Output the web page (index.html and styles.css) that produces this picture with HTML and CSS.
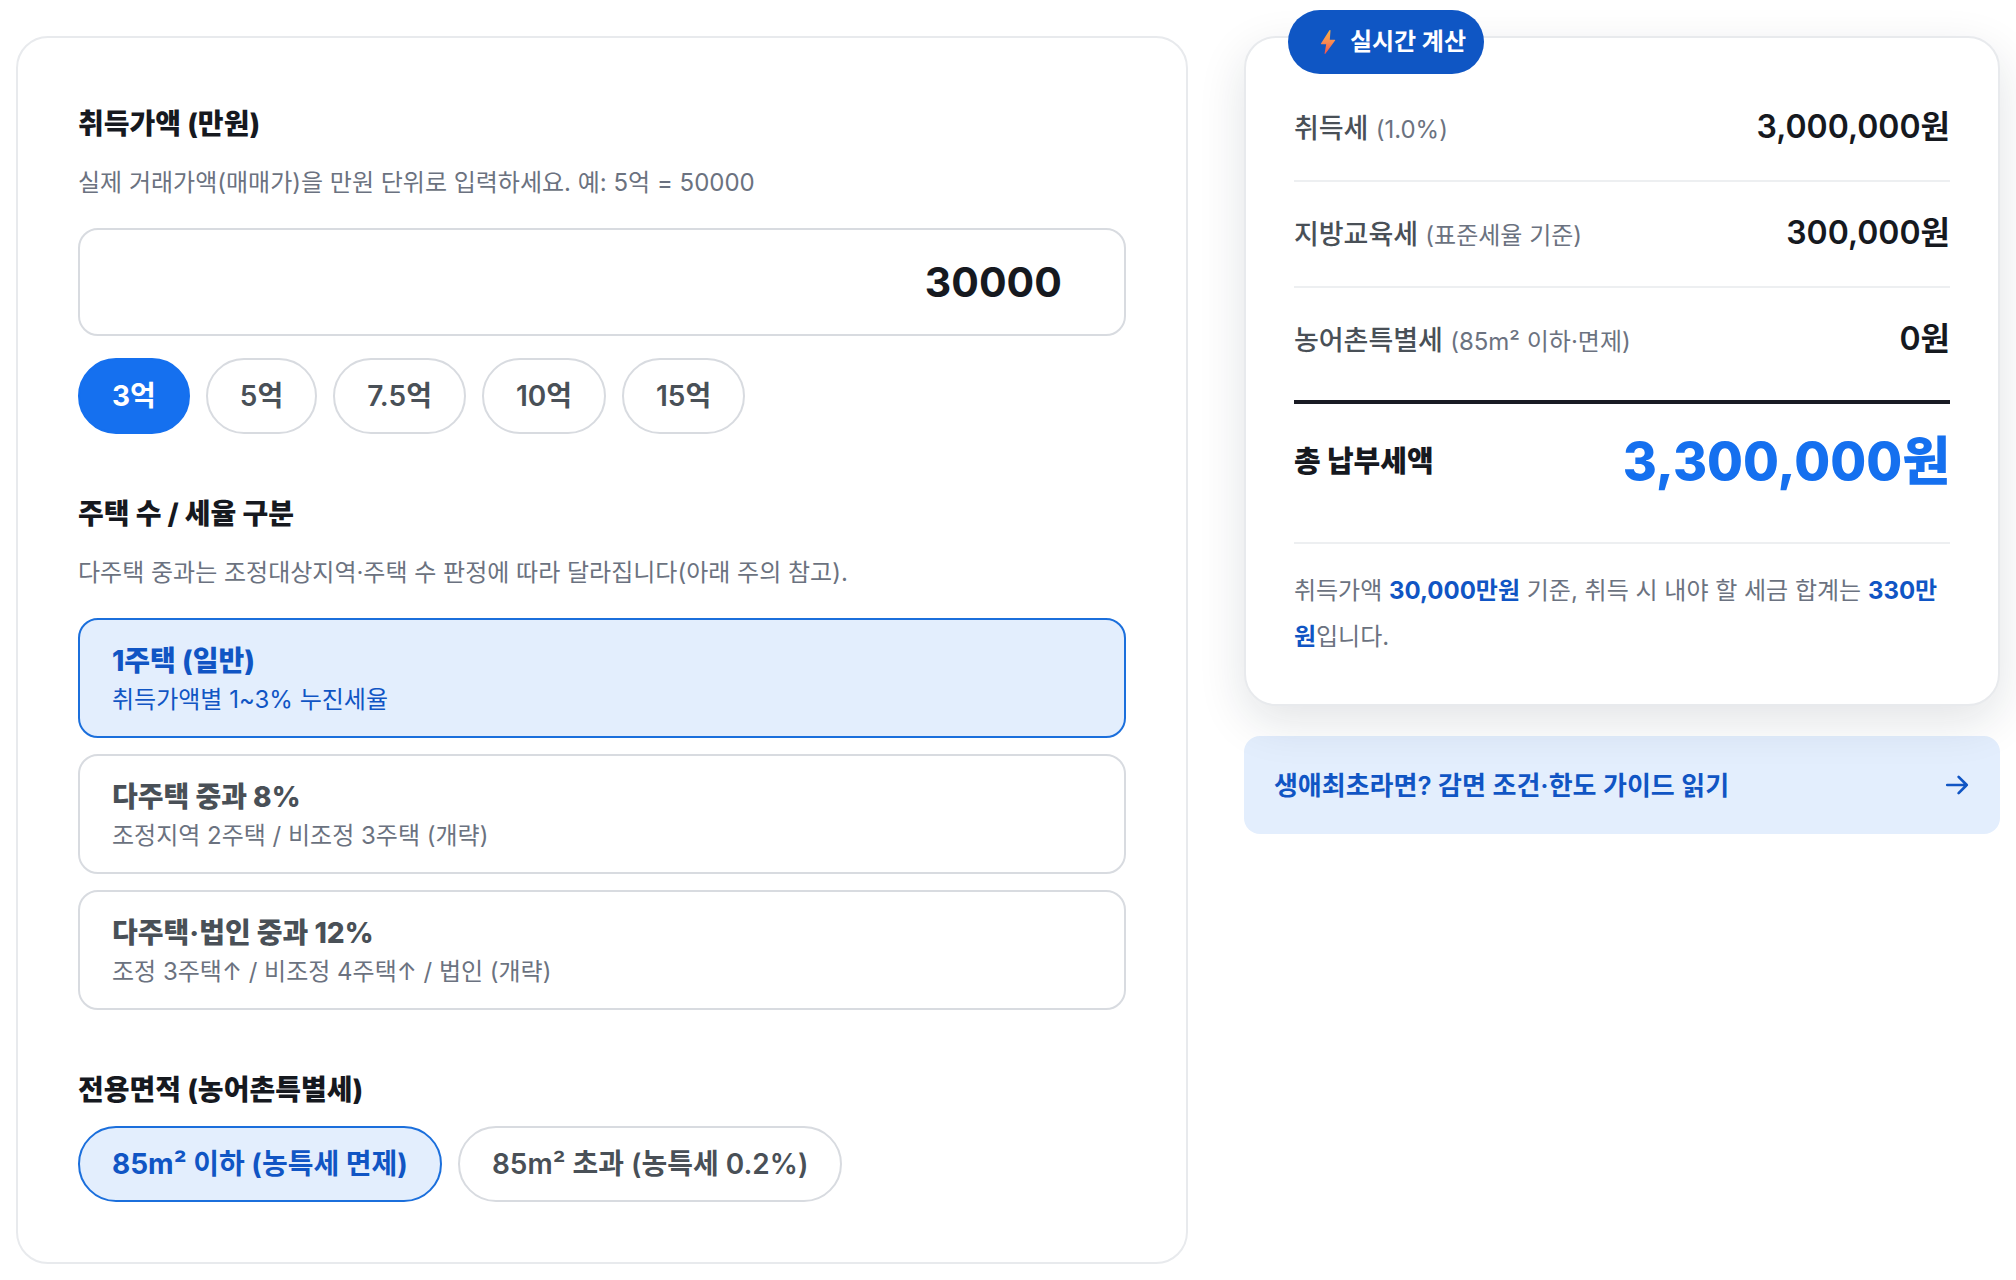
FILE: index.html
```html
<!DOCTYPE html>
<html lang="ko">
  <head>
    <meta charset="UTF-8" />
    <meta name="viewport" content="width=device-width, initial-scale=1.0" />
    <title>취득세 계산기</title>
    <link rel="stylesheet" href="styles.css">
  </head>
  <body>
    <main class="calculator">
      <form class="card form-card">
        <section class="field">
          <label class="field-title" for="price">취득가액 (만원)</label>
          <p class="field-hint" id="price-hint">실제 거래가액(매매가)을 만원 단위로 입력하세요. 예: 5억 = 50000</p>
          <input class="price-input" id="price" type="text" inputmode="numeric" value="30000" aria-describedby="price-hint" />
          <div class="chips">
            <button class="chip chip-primary" type="button">3억</button>
            <button class="chip" type="button">5억</button>
            <button class="chip" type="button">7.5억</button>
            <button class="chip" type="button">10억</button>
            <button class="chip" type="button">15억</button>
          </div>
        </section>

        <section class="field">
          <h2 class="field-title">주택 수 / 세율 구분</h2>
          <p class="field-hint">다주택 중과는 조정대상지역·주택 수 판정에 따라 달라집니다(아래 주의 참고).</p>
          <div class="options">
            <button class="option selected" type="button" aria-pressed="true">
              <strong class="option-name">1주택 (일반)</strong>
              <span class="option-desc">취득가액별 1~3% 누진세율</span>
            </button>
            <button class="option" type="button" aria-pressed="false">
              <strong class="option-name">다주택 중과 8%</strong>
              <span class="option-desc">조정지역 2주택 / 비조정 3주택 (개략)</span>
            </button>
            <button class="option" type="button" aria-pressed="false">
              <strong class="option-name">다주택·법인 중과 12%</strong>
              <span class="option-desc">조정 3주택↑ / 비조정 4주택↑ / 법인 (개략)</span>
            </button>
          </div>
        </section>

        <section class="field">
          <h2 class="field-title">전용면적 (농어촌특별세)</h2>
          <div class="chips">
            <button class="chip selected" type="button" aria-pressed="true">85m² 이하 (농특세 면제)</button>
            <button class="chip" type="button" aria-pressed="false">85m² 초과 (농특세 0.2%)</button>
          </div>
        </section>
      </form>

      <aside class="side">
        <section class="card result-card">
          <div class="badge">
            <svg class="badge-icon" viewBox="0 0 16 26" aria-hidden="true">
              <defs>
                <linearGradient id="bolt" x1="0" y1="0" x2="0" y2="1">
                  <stop offset="0" stop-color="#fbb03f" />
                  <stop offset="0.5" stop-color="#f98b52" />
                  <stop offset="1" stop-color="#ee5050" />
                </linearGradient>
              </defs>
              <path d="M9.4 1.200 1 14.400q-.4.800.5.800H6.200L4.600 24.200q-.1 1.300.8.500L15.100 11.600q.5-.8-.5-.8H9.800L10.500 1.600q0-1.200-1.100-.4z" fill="url(#bolt)" />
            </svg>
            <span>실시간 계산</span>
          </div>
          <dl class="rows">
            <div class="row">
              <dt>취득세 <small>(1.0%)</small></dt>
              <dd>3,000,000원</dd>
            </div>
            <div class="row">
              <dt>지방교육세 <small>(표준세율 기준)</small></dt>
              <dd>300,000원</dd>
            </div>
            <div class="row row-last">
              <dt>농어촌특별세 <small>(85m² 이하·면제)</small></dt>
              <dd>0원</dd>
            </div>
            <div class="row row-total">
              <dt>총 납부세액</dt>
              <dd>3,300,000원</dd>
            </div>
          </dl>
          <p class="summary">취득가액 <b>30,000만원</b> 기준, 취득 시 내야 할 세금 합계는 <b>330만원</b>입니다.</p>
        </section>
        <a class="guide-link" href="#guide">
          <span>생애최초라면? 감면 조건·한도 가이드 읽기</span>
          <svg class="guide-arrow" viewBox="0 0 24 24" aria-hidden="true">
            <path d="M3 12h18M13.500 4.500 21 12l-7.500 7.500" />
          </svg>
        </a>
      </aside>
    </main>
  </body>
</html>
```

FILE: styles.css
```css
* {
  box-sizing: border-box;
}
body {
  margin: 0;
  background-color: #fff;
  color: #16191f;
  font-family: Inter, "Noto Sans CJK KR", sans-serif;
  line-height: 1.5;
}
h2,
p,
dl,
dd {
  margin: 0;
}
button,
input {
  font: inherit;
}
.calculator {
  display: grid;
  grid-template-columns: 1.55fr 1fr;
  gap: 56px;
  align-items: start;
  padding: 36px 16px 16px;
}
.card {
  background-color: #fff;
  border: 2px solid #e8eaed;
  border-radius: 32px;
}

/* 입력 폼 */
.form-card {
  display: flex;
  flex-direction: column;
  gap: 58px;
  padding: 64px 60px 60px;
}
.field-title {
  display: block;
  font-size: 28px;
  font-weight: 800;
  line-height: 44px;
}
.field-hint {
  margin-top: 17px;
  color: #6b7280;
  font-size: 24px;
  line-height: 40px;
}
.price-input {
  display: block;
  width: 100%;
  height: 108px;
  margin-top: 25px;
  padding: 0 62px 0 32px;
  border: 2px solid #d8dbe0;
  border-radius: 20px;
  background-color: #fff;
  color: #16191f;
  font-size: 41px;
  font-weight: 700;
  text-align: right;
}
.chips {
  display: flex;
  flex-wrap: wrap;
  gap: 16px;
  margin-top: 22px;
}
.field-title + .chips {
  margin-top: 14px;
}
.chip {
  height: 76px;
  padding: 0 32px;
  border: 2px solid #d8dbe0;
  border-radius: 38px;
  background-color: #fff;
  color: #495057;
  font-size: 28px;
  font-weight: 600;
}
.chip-primary {
  border-color: #1570ef;
  background-color: #1570ef;
  color: #fff;
  font-weight: 700;
}
.options {
  display: flex;
  flex-direction: column;
  gap: 16px;
  margin-top: 25px;
}
.option {
  display: flex;
  flex-direction: column;
  padding: 20px 32px 18px;
  border: 2px solid #d8dbe0;
  border-radius: 20px;
  background-color: #fff;
  color: #495057;
  text-align: left;
}
.option-name {
  font-size: 28px;
  font-weight: 800;
  line-height: 42px;
}
.option-desc {
  color: #6b7280;
  font-size: 24px;
  line-height: 36px;
}
.selected {
  border-color: #1b6fdc;
  background-color: #e3eefd;
  color: #1055c4;
}
.chip.selected {
  font-weight: 700;
}
.selected .option-desc {
  color: #1055c4;
}

/* 계산 결과 */
.side {
  display: flex;
  flex-direction: column;
  gap: 30px;
}
.result-card {
  position: relative;
  z-index: 1;
  padding: 38px 48px 44px;
  box-shadow: 0 16px 48px rgba(20, 30, 50, 0.12);
}
.badge {
  position: absolute;
  top: -28px;
  left: 42px;
  display: flex;
  align-items: center;
  gap: 14px;
  height: 64px;
  padding: 0 18px 0 32px;
  border-radius: 32px;
  background-color: #0f56c4;
  color: #fff;
  font-size: 24px;
  font-weight: 700;
}
.badge-icon {
  width: 16px;
  height: 26px;
}
.row {
  display: flex;
  justify-content: space-between;
  align-items: baseline;
  height: 106px;
  padding-top: 27px;
  border-bottom: 2px solid #edeff1;
}
.row dt {
  color: #495057;
  font-size: 27px;
  font-weight: 500;
}
.row small {
  color: #6b7280;
  font-size: 24px;
  font-weight: 400;
}
.row dd {
  font-size: 32px;
  font-weight: 600;
}
.row-last {
  height: 112px;
  border-bottom: 0;
}
.row-total {
  align-items: center;
  height: 144px;
  padding: 0 0 22px;
  border-top: 4px solid #191b24;
}
.row-total dt {
  color: #16191f;
  font-size: 29px;
  font-weight: 800;
}
.row-total dd {
  color: #1570ef;
  font-size: 52px;
  font-weight: 800;
}
.summary {
  padding-top: 24px;
  color: #6b7280;
  font-size: 24px;
  line-height: 46px;
}
.summary b {
  color: #1055c4;
}
.guide-link {
  display: flex;
  justify-content: space-between;
  align-items: center;
  height: 98px;
  padding: 0 30px;
  border-radius: 16px;
  background-color: #e3eefd;
  color: #1055c4;
  font-size: 26px;
  font-weight: 600;
  text-decoration: none;
}
.guide-arrow {
  width: 26px;
  height: 26px;
  fill: none;
  stroke: currentColor;
  stroke-width: 2.5;
  stroke-linecap: round;
  stroke-linejoin: round;
}
```
